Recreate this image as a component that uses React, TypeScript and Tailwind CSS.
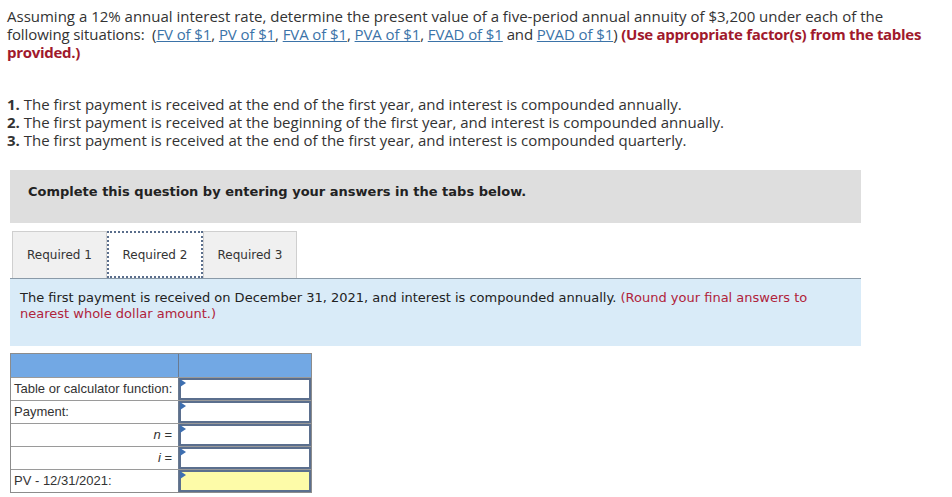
export default function App() {
  const links = ['FV of $1', 'PV of $1', 'FVA of $1', 'PVA of $1', 'FVAD of $1'];
  const rows = [
    { label: 'Table or calculator function:', right: false, italic: '' },
    { label: 'Payment:', right: false, italic: '' },
    { label: '', right: true, italic: 'n' },
    { label: '', right: true, italic: 'i' },
    { label: 'PV - 12/31/2021:', right: false, italic: '' },
  ];

  return (
    <div className="min-h-screen overflow-hidden bg-white text-[#333]">
      {/* question text */}
      <div className="pl-[7px] pt-[7px] font-['Open_Sans',sans-serif] text-[15px] leading-[18px] text-[#333]">
        <p>
          Assuming a 12% annual interest rate, determine the present value of a five-period annual annuity of $3,200 under each of the
          <br />
          <span className="whitespace-nowrap tracking-[-0.1px]">
            following situations:{'\u00a0 '}(
            {links.map((l, i) => (
              <span key={l}>
                <a className="text-[#3b73a8] underline">{l}</a>
                {i < links.length - 1 ? ', ' : ' '}
              </span>
            ))}
            and <a className="text-[#3b73a8] underline">PVAD of $1</a>){' '}
            <b className="text-[#a0192c] tracking-[-0.3px]">(Use appropriate factor(s) from the tables</b>
          </span>
          <br />
          <b className="text-[#a0192c] tracking-[-0.3px]">provided.)</b>
        </p>

        <div className="mt-[34px]">
          <p><b>1.</b> The first payment is received at the end of the first year, and interest is compounded annually.</p>
          <p><b>2.</b> The first payment is received at the beginning of the first year, and interest is compounded annually.</p>
          <p><b>3.</b> The first payment is received at the end of the first year, and interest is compounded quarterly.</p>
        </div>
      </div>

      {/* instructions box */}
      <div className="ml-[10px] mt-[21px] h-[53px] w-[851px] bg-[#dedede] pl-[18px] pt-[14px] font-['DejaVu_Sans',sans-serif] text-[13px] font-bold leading-[16px] text-[#222]">
        Complete this question by entering your answers in the tabs below.
      </div>

      {/* tabs */}
      <div className="ml-[12px] mt-[8px] flex h-[47px] items-stretch font-['DejaVu_Sans',sans-serif] text-[12px] text-[#333]">
        <div className="flex w-[95px] items-center justify-center border border-b-0 border-[#cfcfcf] bg-[#f0f0f0]">Required 1</div>
        <div className="flex w-[96px] items-center justify-center border-2 border-dotted border-[#5a6e8c] bg-white">Required 2</div>
        <div className="flex w-[94px] items-center justify-center border border-b-0 border-[#cfcfcf] bg-[#f0f0f0]">Required 3</div>
      </div>

      {/* info panel */}
      <div className="ml-[10px] h-[68px] w-[851px] border-t border-[#8a9aa8] bg-[#d9ebf8] px-[10px] pt-[11px] font-['DejaVu_Sans',sans-serif] text-[13px] leading-[16px] text-[#222]">
        The first payment is received on December 31, 2021, and interest is compounded annually.{' '}
        <span className="text-[#b0233b]">(Round your final answers to nearest whole dollar amount.)</span>
      </div>

      {/* answer table */}
      <div className="ml-[10px] mt-[7px] w-[302px] border border-[#8c8c8c] font-['Liberation_Sans',sans-serif] text-[13px] text-[#333]">
        <div className="grid h-[23px] grid-cols-[168px_1fr] bg-[#72a8e4]">
          <div className="border-r border-[#6a7a90]" />
          <div />
        </div>
        {rows.map((r, i) => (
          <div key={i} className="grid h-[23px] grid-cols-[168px_1fr] border-t border-[#9a9a9a]">
            <div className={`flex items-center border-r border-[#6a7a90] px-[3px] ${r.right ? 'justify-end pr-[6px]' : ''}`}>
              {r.italic ? (
                <span>
                  <i>{r.italic}</i> =
                </span>
              ) : (
                r.label
              )}
            </div>
            <div className={`relative border-2 border-[#5b6f8e] ${i === 4 ? 'bg-[#fdfba8]' : 'bg-white'}`}>
              <svg className="absolute left-[-1px] top-[-1px]" width="6" height="8" viewBox="0 0 6 8">
                <path d="M0 0 L6 4 L0 8 Z" fill="#3e6fb0" />
              </svg>
            </div>
          </div>
        ))}
      </div>
    </div>
  );
}
